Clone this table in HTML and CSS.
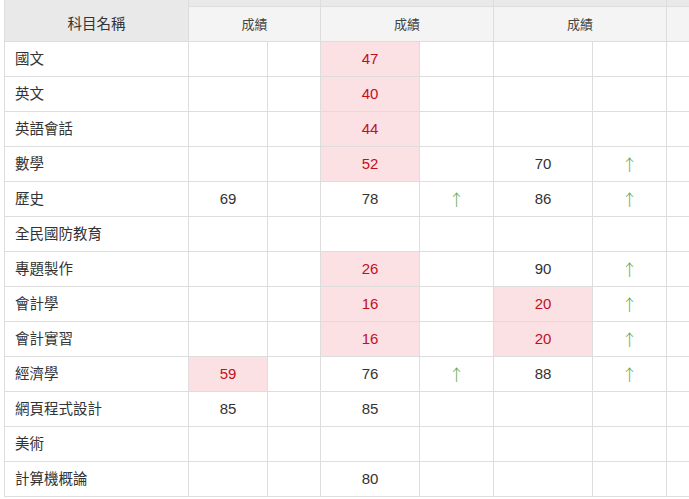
FILE: index.html
```html
<!DOCTYPE html>
<html lang="zh-Hant">
<head>
<meta charset="utf-8">
<title>成績</title>
<link rel="stylesheet" href="styles.css">
</head>
<body>
<div class="wrap">
<table class="grades">
  <colgroup>
    <col class="c-name"><col class="c-sa"><col class="c-sb"><col class="c-w"><col class="c-n"><col class="c-w"><col class="c-n"><col class="c-w">
  </colgroup>
  <thead>
    <tr class="strip">
      <th class="name-h top"></th>
      <th colspan="2"></th>
      <th colspan="2"></th>
      <th colspan="2"></th>
      <th></th>
    </tr>
    <tr class="head">
      <th class="name-h">科目名稱</th>
      <th colspan="2">成績</th>
      <th colspan="2">成績</th>
      <th colspan="2">成績</th>
      <th></th>
    </tr>
  </thead>
  <tbody>
    <tr><td class="name">國文</td><td></td><td></td><td class="low">47</td><td></td><td></td><td></td><td></td></tr>
    <tr><td class="name">英文</td><td></td><td></td><td class="low">40</td><td></td><td></td><td></td><td></td></tr>
    <tr><td class="name">英語會話</td><td></td><td></td><td class="low">44</td><td></td><td></td><td></td><td></td></tr>
    <tr><td class="name">數學</td><td></td><td></td><td class="low">52</td><td></td><td class="num">70</td><td class="up">↑</td><td></td></tr>
    <tr><td class="name">歷史</td><td class="num">69</td><td></td><td class="num">78</td><td class="up">↑</td><td class="num">86</td><td class="up">↑</td><td></td></tr>
    <tr><td class="name">全民國防教育</td><td></td><td></td><td></td><td></td><td></td><td></td><td></td></tr>
    <tr><td class="name">專題製作</td><td></td><td></td><td class="low">26</td><td></td><td class="num">90</td><td class="up">↑</td><td></td></tr>
    <tr><td class="name">會計學</td><td></td><td></td><td class="low">16</td><td></td><td class="low">20</td><td class="up">↑</td><td></td></tr>
    <tr><td class="name">會計實習</td><td></td><td></td><td class="low">16</td><td></td><td class="low">20</td><td class="up">↑</td><td></td></tr>
    <tr><td class="name">經濟學</td><td class="low">59</td><td></td><td class="num">76</td><td class="up">↑</td><td class="num">88</td><td class="up">↑</td><td></td></tr>
    <tr><td class="name">網頁程式設計</td><td class="num">85</td><td></td><td class="num">85</td><td></td><td></td><td></td><td></td></tr>
    <tr><td class="name">美術</td><td></td><td></td><td></td><td></td><td></td><td></td><td></td></tr>
    <tr><td class="name">計算機概論</td><td></td><td></td><td class="num">80</td><td></td><td></td><td></td><td></td></tr>
  </tbody>
</table>
</div>
</body>
</html>
```

FILE: styles.css
```css
html, body {
  margin: 0;
  padding: 0;
  background: #ffffff;
}

.wrap {
  padding-left: 4px;
  overflow: hidden;
}

.grades {
  border-collapse: collapse;
  table-layout: fixed;
  width: 761px;
  font-family: "Noto Sans CJK TC", "Liberation Sans", sans-serif;
  color: #333333;
}

.c-name { width: 184px; }
.c-sa { width: 79px; }
.c-sb { width: 53px; }
.c-w { width: 99px; }
.c-n { width: 74px; }

.grades th,
.grades td {
  border: 1px solid #dddddd;
  padding: 0;
  text-align: center;
  vertical-align: middle;
}

.strip th {
  height: 6px;
  background: #e9e9e9;
  font-size: 0;
  line-height: 0;
  border-top: none;
}

.strip th.top {
  border-bottom: none;
}

.head th {
  height: 32px;
  padding-bottom: 2px;
  background: #f4f4f4;
  font-size: 13px;
  font-weight: normal;
  color: #444444;
  line-height: 1;
}

.head th.name-h,
.strip th.name-h {
  background: #e9e9e9;
  font-size: 14.5px;
  color: #333333;
}

.head th.name-h {
  border-top: none;
}

.grades td {
  height: 32px;
  padding-bottom: 2px;
  font-size: 15px;
  line-height: 1;
}

.grades td.name {
  text-align: left;
  padding-left: 10px;
  font-size: 14.5px;
}

.num {
  font-family: "Liberation Sans", sans-serif;
  color: #333333;
}

.low {
  font-family: "Liberation Sans", sans-serif;
  color: #c0101e;
  background: #fce1e4;
}

.grades td.up {
  color: #62a84a;
  font-family: "Noto Sans CJK TC", sans-serif;
  font-size: 16px;
  font-weight: 300;
  padding-top: 1px;
  padding-bottom: 1px;
}
```
